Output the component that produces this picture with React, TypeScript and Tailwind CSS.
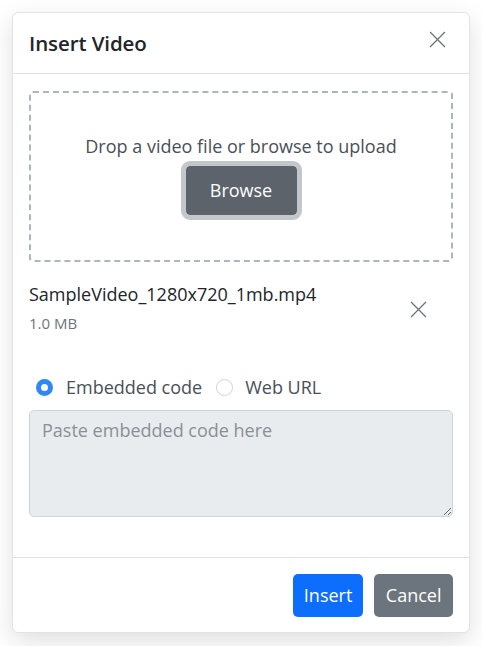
import { useState } from 'react';

const font = { fontFamily: '"Open Sans", "Noto Sans", sans-serif' };

const XIcon = ({ size = 16 }: { size?: number }) => (
    <svg width={size} height={size} viewBox="0 0 16 16" fill="none" stroke="currentColor" strokeWidth="1.2">
        <path d="M1 1l14 14M15 1L1 15" />
    </svg>
);

const App = () => {
    const [mode, setMode] = useState('embed');

    return (
        <div className="w-[482px] h-[646px] bg-white p-3" style={font}>
            <div className="h-[621px] flex flex-col bg-white rounded-md border border-[#e3e3e3] shadow-[0_8px_24px_rgba(0,0,0,0.13)]">
                <div className="flex items-center justify-between px-4 h-[61px] border-b border-[#dee2e6]">
                    <h1 className="text-[20.5px] font-semibold text-[#212529] tracking-[-0.1px]">Insert Video</h1>
                    <button className="text-[#6c757d] mr-[7px] -mt-[8px]">
                        <XIcon size={17} />
                    </button>
                </div>

                <div className="flex-1 px-4 pt-[17px]">
                    <div className="h-[171px] border-2 border-dashed border-[#adb5bd] rounded flex flex-col items-center pt-[40px]">
                        <p className="text-[18px] text-[#495057] leading-[26px]">Drop a video file or browse to upload</p>
                        <button className="mt-[2px] w-[121px] h-[59px] rounded-[9px] bg-[#5c636a] text-white text-[18px] border-[5px] border-[#c3c6ca] bg-clip-padding">
                            Browse
                        </button>
                    </div>

                    <div className="flex items-center justify-between mt-[19px]">
                        <div>
                            <div className="text-[18px] text-[#212529] leading-[26px]">SampleVideo_1280x720_1mb.mp4</div>
                            <div className="text-[15px] text-[#6c757d] mt-[5px]">1.0 MB</div>
                        </div>
                        <button className="text-[#6c757d] mr-[26px] mt-[4px]">
                            <XIcon size={17} />
                        </button>
                    </div>

                    <div className="flex items-center mt-[39px] ml-[7px] text-[18px] text-[#495057]">
                        <label className="flex items-center cursor-pointer" onClick={() => setMode('embed')}>
                            <span className={mode === 'embed' ? 'w-[17px] h-[17px] rounded-full border-[5px] border-[#2f86f6] bg-white' : 'w-[17px] h-[17px] rounded-full border border-[#ced4da] bg-white'} />
                            <span className="ml-[13px]">Embedded code</span>
                        </label>
                        <label className="flex items-center cursor-pointer ml-[14px]" onClick={() => setMode('url')}>
                            <span className={mode === 'url' ? 'w-[17px] h-[17px] rounded-full border-[5px] border-[#2f86f6] bg-white' : 'w-[17px] h-[17px] rounded-full border border-[#ced4da] bg-white'} />
                            <span className="ml-[12px]">Web URL</span>
                        </label>
                    </div>

                    <textarea
                        placeholder="Paste embedded code here"
                        className="block mt-[9px] w-full h-[107px] bg-[#e9ecef] border border-[#ced4da] rounded-[5px] px-3 py-[6px] text-[18px] text-[#212529] placeholder:text-[#8a9096] outline-none"
                        style={font}
                    />
                </div>

                <div className="flex justify-end items-center gap-[11px] px-4 h-[75px] border-t border-[#dee2e6]">
                    <button className="h-[43px] px-[11px] bg-[#0d6efd] text-white text-[18px] rounded-[5px]">Insert</button>
                    <button className="h-[43px] px-[11.5px] bg-[#6c757d] text-white text-[18px] rounded-[5px]">Cancel</button>
                </div>
            </div>
        </div>
    );
};

export default App;
